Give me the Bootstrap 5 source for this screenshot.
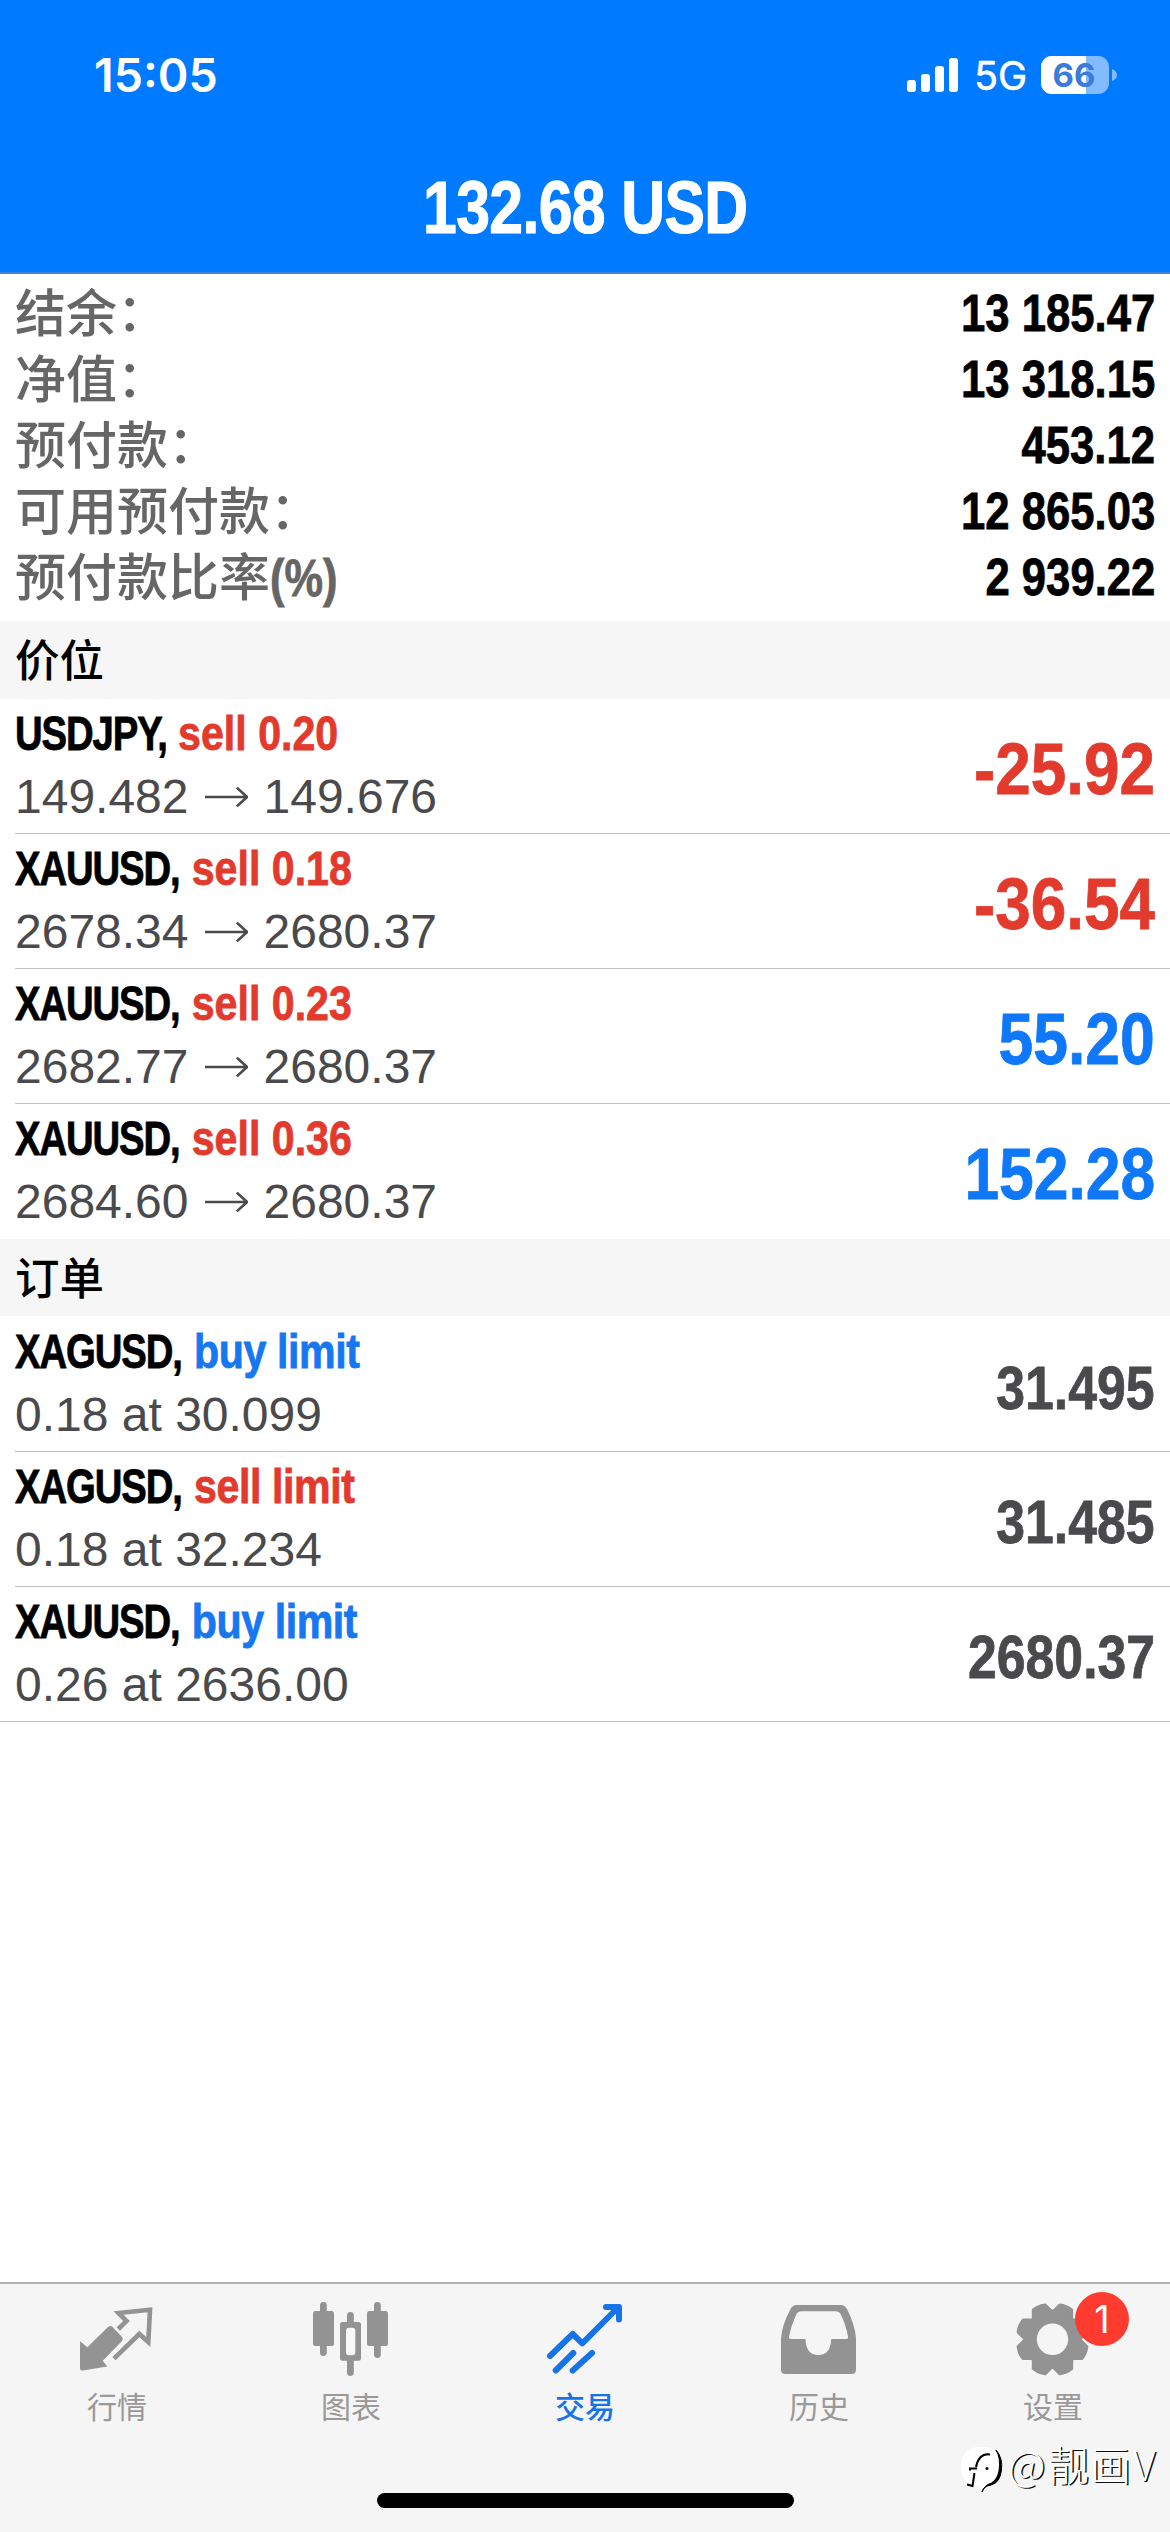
<!DOCTYPE html>
<html lang="zh-CN">
<head>
<meta charset="utf-8">
<meta name="viewport" content="width=device-width, initial-scale=1">
<title>交易</title>
<link href="https://cdn.jsdelivr.net/npm/bootstrap@5.3.0/dist/css/bootstrap.min.css" rel="stylesheet">
<script src="https://cdn.jsdelivr.net/npm/bootstrap@5.3.0/dist/js/bootstrap.bundle.min.js" defer></script>
<style>
body{font-family:"Liberation Sans","Noto Sans CJK SC",sans-serif;color:#000;background:#fff}
.screen{width:1170px;height:2532px;overflow:hidden}
.topbar{height:274px;background:#007aff;border-bottom:2px solid #3e82d0}
.statusbar{height:150px;padding:0 53px 0 94px;font-family:Inter,sans-serif}
.clock{font-size:46.5px;font-weight:600;line-height:1}
.net{font-size:39px;line-height:1;margin:0 14px 0 15px;-webkit-text-stroke:.6px #fff}
.balance{font-size:75px;line-height:115px}
.cond{display:inline-block;font-weight:700;transform:scaleX(.84);white-space:nowrap;line-height:1;-webkit-text-stroke:.8px currentColor}
.balance .cond{transform:scaleX(.81);letter-spacing:-.8px;-webkit-text-stroke-width:1.2px}
.from-left{transform-origin:0 50%}
.from-right{transform-origin:100% 50%}
.pad-x{padding-left:15px;padding-right:15px}
.summary{height:347px;padding-top:6px}
.sum-line{height:66px}
.sum-label{font-size:51px;font-weight:500;color:#666;line-height:60px;margin-top:-6px;font-family:"Noto Sans CJK SC",sans-serif;white-space:nowrap}
.colon{position:relative;top:-1px}
.ratio{font-family:"Liberation Sans",sans-serif;font-size:51px;transform:scaleX(.85)}
.sum-value{font-size:52px}
.sec-head{height:77.5px;background:#f6f6f6;font-size:44.5px;font-weight:500;line-height:74px;font-family:"Noto Sans CJK SC",sans-serif}
.deal{height:135px;margin-left:15px;padding-right:15px;border-bottom:1px solid #c0c0c2}
.deal.last-open{border-bottom-color:transparent}
.deal.last-full{margin-left:0;padding-left:15px}
.sym{font-size:49px;margin-top:10px}
.sym .pair{display:inline-block;transform:scaleX(.93);transform-origin:0 50%;letter-spacing:-1.4px;margin-right:-14px}
.sub{font-size:48px;line-height:1;color:#4a4a4d;margin-top:15px;white-space:nowrap}
.c-red{color:#e23b2e}.c-blue{color:#1677f0}
.c-lim{letter-spacing:-.5px}
.profit{font-size:73px;transform:scaleX(.875);padding-top:5px}
.profit.c-blue{transform:scaleX(.855);color:#0f78f8}
.price{font-size:62px;color:#4a4a4d;padding-top:5px;transform:scaleX(.835)}
.tabs{height:250px;background:#f5f5f5;border-top:2px solid #b2b2b2}
.tab-item{width:234px;color:#999;font-size:30px;font-family:"Noto Sans CJK SC",sans-serif;line-height:40px;padding-top:12px}
.tab-item svg{height:89px;width:90px}
.tab-item.on{color:#1673e8;font-weight:500}
.count{top:8px;left:139px;width:54px;height:54px;background:#ff3b2f;font-size:38px;line-height:54px;font-family:Inter,sans-serif}
.homebar{left:377px;bottom:24px;width:417px;height:15px;background:#000}
.wm{left:950px;bottom:22px}
.wm text{font-family:"Noto Sans CJK SC",sans-serif;font-weight:300;font-size:41px;fill:#fff;text-shadow:1.6px 1px 0 #111}
</style>
</head>
<body>
<div class="screen d-flex flex-column position-relative">
<header class="topbar text-white">
  <div class="statusbar d-flex align-items-center justify-content-between">
    <span class="clock">15:05</span>
    <div class="d-flex align-items-center">
      <svg width="52" height="36" viewBox="0 0 52 36" fill="#fff"><rect x="0" y="23" width="9" height="12" rx="3"/><rect x="14" y="17" width="9" height="18" rx="3"/><rect x="28" y="9" width="9" height="26" rx="3"/><rect x="42" y="1" width="9" height="34" rx="3"/></svg>
      <span class="net">5G</span>
      <svg width="76" height="40" viewBox="0 0 76 40"><defs><clipPath id="bt"><rect x="0" y="1" width="68" height="38" rx="11"/></clipPath></defs><g clip-path="url(#bt)"><rect width="68" height="40" fill="#82bcff"/><rect width="45" height="40" fill="#fff"/></g><path d="M71 14q5 2 5 6t-5 6z" fill="#82bcff"/><text x="33" y="32" text-anchor="middle" font-family="Inter" font-weight="700" font-size="33" fill="#3a7bdc">66</text></svg>
    </div>
  </div>
  <div class="balance text-center"><span class="cond">132.68 USD</span></div>
</header>
<main class="flex-grow-1">
  <section class="summary pad-x">
    <div class="sum-line d-flex justify-content-between align-items-center"><span class="sum-label">结余<span class="colon">：</span></span><span class="cond from-right sum-value">13 185.47</span></div>
    <div class="sum-line d-flex justify-content-between align-items-center"><span class="sum-label">净值<span class="colon">：</span></span><span class="cond from-right sum-value">13 318.15</span></div>
    <div class="sum-line d-flex justify-content-between align-items-center"><span class="sum-label">预付款<span class="colon">：</span></span><span class="cond from-right sum-value">453.12</span></div>
    <div class="sum-line d-flex justify-content-between align-items-center"><span class="sum-label">可用预付款<span class="colon">：</span></span><span class="cond from-right sum-value">12 865.03</span></div>
    <div class="sum-line d-flex justify-content-between align-items-center"><span class="sum-label">预付款比率<span class="cond from-left ratio">(%)</span></span><span class="cond from-right sum-value">2 939.22</span></div>
  </section>

  <div class="sec-head pad-x">价位</div>
  <section>
    <div class="deal d-flex justify-content-between align-items-center">
      <div class="align-self-start d-flex flex-column align-items-start"><span class="cond from-left sym"><span class="pair">USDJPY,</span> <span class="c-red">sell 0.20</span></span>
      <div class="sub d-flex align-items-center">149.482<svg class="mx-3" width="43" height="24" viewBox="0 0 46 24" fill="none" stroke="currentColor" stroke-width="2.8"><path d="M0 12H45M34 2L45 12L34 22"/></svg>149.676</div></div>
      <span class="cond from-right profit c-red">-25.92</span>
    </div>
    <div class="deal d-flex justify-content-between align-items-center">
      <div class="align-self-start d-flex flex-column align-items-start"><span class="cond from-left sym"><span class="pair">XAUUSD,</span> <span class="c-red">sell 0.18</span></span>
      <div class="sub d-flex align-items-center">2678.34<svg class="mx-3" width="43" height="24" viewBox="0 0 46 24" fill="none" stroke="currentColor" stroke-width="2.8"><path d="M0 12H45M34 2L45 12L34 22"/></svg>2680.37</div></div>
      <span class="cond from-right profit c-red">-36.54</span>
    </div>
    <div class="deal d-flex justify-content-between align-items-center">
      <div class="align-self-start d-flex flex-column align-items-start"><span class="cond from-left sym"><span class="pair">XAUUSD,</span> <span class="c-red">sell 0.23</span></span>
      <div class="sub d-flex align-items-center">2682.77<svg class="mx-3" width="43" height="24" viewBox="0 0 46 24" fill="none" stroke="currentColor" stroke-width="2.8"><path d="M0 12H45M34 2L45 12L34 22"/></svg>2680.37</div></div>
      <span class="cond from-right profit c-blue">55.20</span>
    </div>
    <div class="deal last-open d-flex justify-content-between align-items-center">
      <div class="align-self-start d-flex flex-column align-items-start"><span class="cond from-left sym"><span class="pair">XAUUSD,</span> <span class="c-red">sell 0.36</span></span>
      <div class="sub d-flex align-items-center">2684.60<svg class="mx-3" width="43" height="24" viewBox="0 0 46 24" fill="none" stroke="currentColor" stroke-width="2.8"><path d="M0 12H45M34 2L45 12L34 22"/></svg>2680.37</div></div>
      <span class="cond from-right profit c-blue">152.28</span>
    </div>
  </section>

  <div class="sec-head pad-x">订单</div>
  <section class="pt-1 mt-n1">
    <div class="deal d-flex justify-content-between align-items-center" style="height:132px">
      <div class="align-self-start d-flex flex-column align-items-start"><span class="cond from-left sym" style="margin-top:7px"><span class="pair">XAGUSD,</span> <span class="c-blue c-lim">buy limit</span></span>
      <div class="sub">0.18 at 30.099</div></div>
      <span class="cond from-right price">31.495</span>
    </div>
    <div class="deal d-flex justify-content-between align-items-center">
      <div class="align-self-start d-flex flex-column align-items-start"><span class="cond from-left sym"><span class="pair">XAGUSD,</span> <span class="c-red c-lim">sell limit</span></span>
      <div class="sub">0.18 at 32.234</div></div>
      <span class="cond from-right price">31.485</span>
    </div>
    <div class="deal last-full d-flex justify-content-between align-items-center">
      <div class="align-self-start d-flex flex-column align-items-start"><span class="cond from-left sym"><span class="pair">XAUUSD,</span> <span class="c-blue c-lim">buy limit</span></span>
      <div class="sub">0.26 at 2636.00</div></div>
      <span class="cond from-right price">2680.37</span>
    </div>
  </section>
</main>

<nav class="tabs d-flex position-relative">
  <div class="tab-item d-flex flex-column align-items-center">
    <svg viewBox="0 0 90 89"><path d="M8 45.3L15.3 51.3L36.3 30.8Q38.5 29 40.5 31L50 41Q51.8 43 50 45L30.7 64.7L35.3 70.6L10.8 74.6Q8 74.6 8 72Z" fill="#939393"/><path d="M46.3 33L54.5 25L46.5 17L78 13.8L76.3 46L67.3 38L42 62.6" fill="none" stroke="#939393" stroke-width="4.6"/></svg>
    <span>行情</span>
  </div>
  <div class="tab-item d-flex flex-column align-items-center">
    <svg viewBox="0 0 90 89" fill="#939393"><rect x="7" y="15" width="21" height="35" rx="2.5"/><rect x="14" y="6" width="6.8" height="54" rx="3.4"/><rect x="34" y="26" width="21" height="38.7" rx="2.5"/><rect x="41" y="16" width="6.8" height="64" rx="3.4"/><rect x="40" y="31.7" width="9.3" height="27.6" rx="3" fill="#f8f8f8"/><rect x="61" y="15" width="21" height="35" rx="2.5"/><rect x="68" y="6" width="6.8" height="56" rx="3.4"/></svg>
    <span>图表</span>
  </div>
  <div class="tab-item on d-flex flex-column align-items-center">
    <svg viewBox="0 0 90 89" fill="none" stroke="#1673e8" stroke-width="6" stroke-linecap="round" stroke-linejoin="round"><path d="M10 60L32.7 38L42.3 47.3L78 11.5M66 11H79V23.5M15.7 74.5L33.3 57M32.7 74.5L52 57"/><path d="M72 11L79 18V11Z" fill="#1673e8" stroke-width="2"/></svg>
    <span>交易</span>
  </div>
  <div class="tab-item d-flex flex-column align-items-center">
    <svg viewBox="0 0 90 89"><path fill="#939393" fill-rule="evenodd" d="M7 42Q8 29 16.5 13Q18.8 9 22.5 9H67Q70.500 9 73 13Q81 29 82 42V73.500Q82 78 77.500 78H11.500Q7 78 7 73.500ZM17 43H31.500Q32 59 44.300 59Q56.700 59 57.200 43H72.300Q74.500 43 74 40.500Q72 29 67 19Q65.500 15.300 61.500 15.300H27.500Q23.500 15.300 22 19Q17 30 15 40.500Q14.700 43 17 43Z"/></svg>
    <span>历史</span>
  </div>
  <div class="tab-item d-flex flex-column align-items-center position-relative">
    <svg viewBox="0 0 90 89"><defs><path id="tooth" d="M-10 -26L-6.500 -34.500Q0 -36.500 6.500 -34.500L10 -26Z" stroke="#939393" stroke-width="3" stroke-linejoin="round"/></defs><g transform="translate(44.500 43.300)" fill="#939393"><circle r="29.500"/><use href="#tooth" transform="rotate(22.500)"/><use href="#tooth" transform="rotate(67.500)"/><use href="#tooth" transform="rotate(112.500)"/><use href="#tooth" transform="rotate(157.500)"/><use href="#tooth" transform="rotate(202.500)"/><use href="#tooth" transform="rotate(247.500)"/><use href="#tooth" transform="rotate(292.500)"/><use href="#tooth" transform="rotate(337.500)"/><circle r="15.700" fill="#f5f5f5"/></g></svg>
    <span>设置</span>
    <span class="count position-absolute rounded-circle text-white text-center">1</span>
  </div>
  <div class="homebar position-absolute rounded-pill"></div>
  <svg class="wm position-absolute" width="220" height="80" viewBox="0 0 220 80">
    <path d="M28 17H36Q51 18 51 34Q51 53 40 55Q34 56 32 62L30 57Q11 55 11 38Q11 18 28 17Z" fill="#fff"/>
    <path d="M46 20Q53 28 51.500 40Q50 53 41 55Q34 56 32 62Q33 58 37 55Q47 52 49 41Q51 28 46 20Z" fill="#000" stroke="#000"/>
    <path d="M40 24.500Q29 23 26 37M20 40.500V38.500H27M24.500 43L22.500 56L17 54.500" fill="none" stroke="#000" stroke-width="2"/><circle cx="37" cy="38.500" r="1.500"/>
    <text x="58 98 140 183" y="51">@靓画V</text>
  </svg>
</nav>
</div>
</body>
</html>
